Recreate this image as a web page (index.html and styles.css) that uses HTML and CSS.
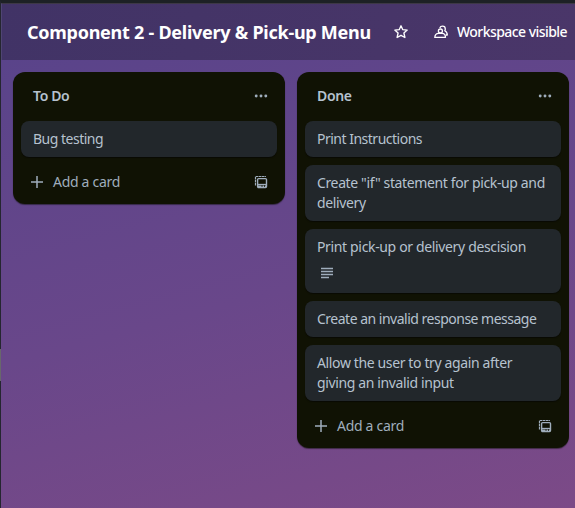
FILE: index.html
```html
<!DOCTYPE html>
<html lang="en">
<head>
<meta charset="utf-8">
<title>Board</title>
<link rel="stylesheet" href="styles.css">
</head>
<body>
<svg class="sprite" aria-hidden="true">
  <symbol id="dots" viewBox="0 0 16 16"><g fill="currentColor"><circle cx="3.2" cy="8" r="1.45"/><circle cx="8" cy="8" r="1.45"/><circle cx="12.8" cy="8" r="1.45"/></g></symbol>
  <symbol id="plus" viewBox="0 0 16 16"><path d="M8 2v12M2 8h12" fill="none" stroke="currentColor" stroke-width="1.5"/></symbol>
  <symbol id="template" viewBox="0 0 16 16">
    <path d="M2.500 11.500V2.500h10.500" fill="none" stroke="currentColor" stroke-width="1.200" stroke-dasharray="2.600 .5"/>
    <rect x="4.600" y="4.600" width="8.900" height="8.900" rx="1" fill="none" stroke="currentColor" stroke-width="1.400"/>
    <path d="M4.500 10.500h9.500" stroke="currentColor" stroke-width="1.300"/>
    <path d="M4.500 12.200h4M9.500 12.200h1.500M12 12.200h2" stroke="currentColor" stroke-width="1.400"/>
  </symbol>
</svg>
<div class="window">
  <header class="board-header">
    <h1 class="board-title">Component 2 - Delivery &amp; Pick-up Menu</h1>
    <svg class="star" width="16" height="16" viewBox="0 0 16 16"><path d="M8 1.800l1.800 3.900 4.400.4-3.300 2.900 1 4.500L8 11.300l-3.900 2.200 1-4.500L1.800 6.100l4.400-.400z" fill="none" stroke="currentColor" stroke-width="1.350" stroke-linejoin="round"/></svg>
    <svg class="people" width="16" height="16" viewBox="0 0 16 16"><g fill="none" stroke="currentColor" stroke-width="1.300" stroke-linejoin="round"><circle cx="7.400" cy="7" r="2"/><path d="M1.800 13.400c.2-2.400 1.600-4 3.800-4h3.600c2 0 3.200 1.600 3.300 4z"/><path d="M6.800 4c.4-1.100 1.500-1.800 2.700-1.800 1.700 0 2.800 1.200 2.800 2.800 0 .7-.2 1.300-.5 1.700 1.500.8 2.500 2.500 2.500 4.300h-1.600"/></g></svg>
    <span class="visibility">Workspace visible</span>
  </header>
  <main class="board">
    <section class="list">
      <div class="list-header"><h2>To Do</h2><svg class="icon"><use href="#dots"/></svg></div>
      <div class="cards">
        <article class="card tight">Bug testing</article>
      </div>
      <div class="list-footer"><svg class="icon"><use href="#plus"/></svg><span>Add a card</span><svg class="icon template"><use href="#template"/></svg></div>
    </section>
    <section class="list">
      <div class="list-header"><h2>Done</h2><svg class="icon"><use href="#dots"/></svg></div>
      <div class="cards">
        <article class="card tight">Print Instructions</article>
        <article class="card">Create "if" statement for pick-up and<br>delivery</article>
        <article class="card has-description">Print pick-up or delivery descision
          <svg class="description" width="16" height="16" viewBox="0 0 16 16"><path d="M2 3.500h12M2 6.500h12M2 9.500h12M2 12.500h8" stroke="currentColor" stroke-width="1.300"/></svg>
        </article>
        <article class="card tight">Create an invalid response message</article>
        <article class="card">Allow the user to try again after<br>giving an invalid input</article>
      </div>
      <div class="list-footer"><svg class="icon"><use href="#plus"/></svg><span>Add a card</span><svg class="icon template"><use href="#template"/></svg></div>
    </section>
  </main>
  <div class="drawer-handle"></div>
</div>
</body>
</html>
```
FILE: styles.css
```css
* { box-sizing: border-box; }
body { margin: 0; overflow: hidden; font: 14px/20px "Noto Sans", "Open Sans", sans-serif; color: #b6c2cf; }
.sprite { position: absolute; width: 0; height: 0; }
.window {
  position: relative;
  height: 508px;
  border-top: 3px solid #1d2125;
  border-left: 1px solid #252630;
  background: linear-gradient(165deg, #57438a 0%, #69478a 55%, #7c4a87 100%);
}
.board-header {
  display: flex;
  align-items: center;
  height: 57px;
  padding-left: 26px;
  border-top: 1px solid #3d3846;
  border-left: 1px solid #4f4573;
  background: linear-gradient(100deg, #413366, #4a3669);
  color: #fff;
  white-space: nowrap;
}
.board-title { width: 344px; margin: 0 0 0 -1px; font-size: 18px; line-height: 24px; font-weight: 700; letter-spacing: -.26px; }
.star { flex: none; margin-left: 22px; }
.people { flex: none; margin-left: 24px; }
.visibility { margin-left: 8px; letter-spacing: -.56px; font-weight: 500; }
.board { display: flex; align-items: flex-start; gap: 12px; padding: 12px 0 0 12px; }
.list { flex: none; width: 272px; padding: 8px; border-radius: 12px; background: #101204; box-shadow: 0 1px 1px rgba(9, 12, 5, .5); }
.list-header { display: flex; align-items: center; justify-content: space-between; height: 32px; padding: 0 8px 0 12px; color: #9fadbc; }
.list-header h2 { margin: 0; font-size: 14px; line-height: 20px; font-weight: 600; color: #b6c2cf; letter-spacing: -.35px; }
.icon { width: 16px; height: 16px; flex: none; }
.cards { display: flex; flex-direction: column; gap: 8px; padding-top: 9px; }
.card { padding: 8px 12px; border-radius: 8px; background: #22272b; box-shadow: 0 1px 1px rgba(3, 4, 4, .5); letter-spacing: -.37px; white-space: nowrap; }
.tight { letter-spacing: -.5px; }
.has-description { height: 64px; letter-spacing: -.35px; }
.description { display: block; margin: 8px 0 0 2px; color: #9fadbc; }
.list-footer { display: flex; align-items: center; gap: 8px; height: 32px; margin-top: 9px; margin-bottom: -2px; padding: 0 8px; color: #9fadbc; letter-spacing: -.3px; }
.template { margin-left: auto; }
.drawer-handle { position: absolute; left: -1px; top: 346px; width: 1px; height: 32px; background: #68676c; }
```
